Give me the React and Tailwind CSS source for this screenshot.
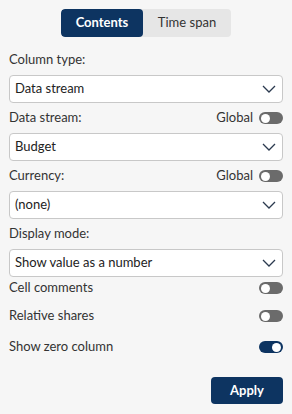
import React from "react";

function Chevron() {
  return (
    <svg width="14" height="8" viewBox="0 0 14 8" className="shrink-0">
      <polyline points="1,1 7,7 13,1" fill="none" stroke="#2b3a4f" strokeWidth="1.3" />
    </svg>
  );
}

function Select({ value }) {
  return (
    <div className="flex h-[28px] items-center justify-between rounded-[4px] border border-[#c8c8c8] bg-white pl-[5px] pr-[6px] text-[13px] text-[#222]">
      <span>{value}</span>
      <Chevron />
    </div>
  );
}

function Toggle({ on }) {
  return on ? (
    <div className="flex h-[12px] w-[24px] items-center justify-end rounded-full bg-[#0d3461] pr-[2px]">
      <div className="h-[9px] w-[9px] rounded-full bg-white" />
    </div>
  ) : (
    <div className="flex h-[12px] w-[24px] items-center rounded-full bg-[#6b6b6b] pl-[2px]">
      <div className="h-[9px] w-[9px] rounded-full bg-white" />
    </div>
  );
}

function Label({ text, global }) {
  return (
    <div className="flex h-[30px] items-center justify-between text-[13px] text-[#333]">
      <span>{text}</span>
      {global && (
        <div className="flex items-center gap-[6px]">
          <span>Global</span>
          <Toggle />
        </div>
      )}
    </div>
  );
}

function ToggleRow({ text, on }) {
  return (
    <div className="flex h-[28px] items-center justify-between text-[13px] text-[#333]">
      <span>{text}</span>
      <Toggle on={on} />
    </div>
  );
}

export default function App() {
  return (
    <div
      className="h-[414px] w-[292px] bg-[#f6f6f6] px-[9px] pt-[9px]"
      style={{ fontFamily: "Lato, 'Open Sans', sans-serif" }}
    >
      <div className="flex justify-center">
        <div className="flex h-[28px] overflow-hidden rounded-[4px] bg-[#e6e6e6] text-[13px]">
          <div className="flex w-[82px] items-center justify-center rounded-[4px] bg-[#0d3461] font-bold text-white">
            Contents
          </div>
          <div className="flex w-[88px] items-center justify-center text-[#333]">Time span</div>
        </div>
      </div>
      <div className="mt-[8px]">
        <Label text="Column type:" />
        <Select value="Data stream" />
        <Label text="Data stream:" global />
        <Select value="Budget" />
        <Label text="Currency:" global />
        <Select value="(none)" />
        <Label text="Display mode:" />
        <Select value="Show value as a number" />
        <div className="mt-[-3px]">
          <ToggleRow text="Cell comments" />
          <ToggleRow text="Relative shares" />
          <div className="mt-[3px]">
            <ToggleRow text="Show zero column" on />
          </div>
        </div>
        <div className="mt-[16px] flex justify-end">
          <div className="flex h-[27px] w-[72px] items-center justify-center rounded-[4px] bg-[#0d3461] text-[13px] font-bold text-white">
            Apply
          </div>
        </div>
      </div>
    </div>
  );
}
